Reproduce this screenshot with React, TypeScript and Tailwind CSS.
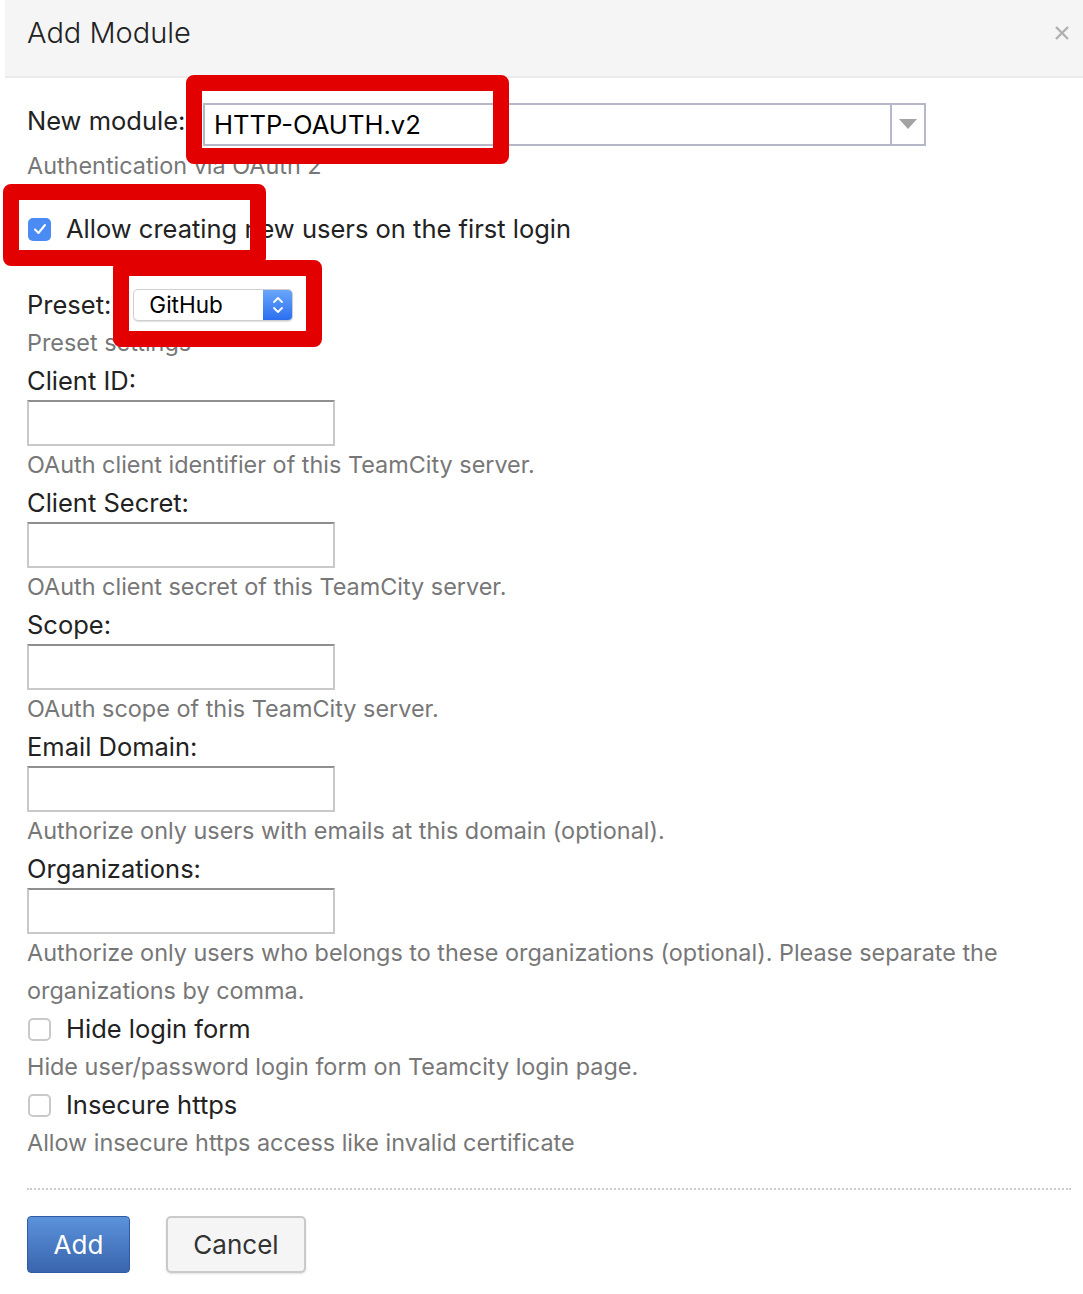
import React from "react";

const font = { fontFamily: "Inter, 'Liberation Sans', sans-serif" };

function Field({ label, help }: { label: string; help: React.ReactNode }) {
  return (
    <div>
      <div className="h-[38px] text-[25.5px] leading-[38px] text-[#222]">{label}</div>
      <div className="h-[46px] w-[308px] border-2 border-[#c9c9c9] border-t-[#8f8f8f] bg-white" />
      <div className="text-[23.4px] leading-[38px] text-[#777]">{help}</div>
    </div>
  );
}

function Checkbox({ checked }: { checked?: boolean }) {
  if (checked) {
    return (
      <div className="flex h-[23px] w-[23px] shrink-0 items-center justify-center rounded-[5px] bg-[#4a8cf3]">
        <svg width="14" height="12" viewBox="0 0 14 12" fill="none">
          <path d="M2 6.5 L5.5 10 L12 2" stroke="white" strokeWidth="2" strokeLinecap="round" strokeLinejoin="round" />
        </svg>
      </div>
    );
  }
  return <div className="h-[23px] w-[23px] shrink-0 rounded-[5px] border-2 border-[#c9c9c9] bg-white" />;
}

export default function App() {
  return (
    <div className="relative min-h-[1294px] w-[1083px] bg-white text-[25.5px]" style={font}>
      {/* Header */}
      <div className="ml-[5px] flex h-[78px] items-center justify-between border-b-2 border-[#ebebeb] bg-[#f5f5f5] pb-[10px] pl-[22px] pr-[14px]">
        <h1 className="text-[29px] font-light text-[#222]">Add Module</h1>
        <svg width="14" height="14" viewBox="0 0 14 14">
          <path d="M1 1 L13 13 M13 1 L1 13" stroke="#b0b0b0" strokeWidth="2.4" />
        </svg>
      </div>

      <div className="pl-[27px] pr-[12px]">
        {/* New module */}
        <div className="mt-[24px] flex items-center">
          <div className="w-[176px] pb-[6px] text-[#222]">New module:</div>
          <div className="flex h-[43px] w-[723px] border-2 border-[#b6b7c9] bg-white">
            <div className="flex-1 pl-[9px] text-[25.6px] leading-[39px] text-black">HTTP-OAUTH.v2</div>
            <div className="flex w-[34px] items-center justify-center border-l-2 border-[#b6b7c9]">
              <svg width="18" height="10" viewBox="0 0 18 10">
                <path d="M0 0 L18 0 L9 10 Z" fill="#a3a3a3" />
              </svg>
            </div>
          </div>
        </div>
        <div className="mt-[1px] text-[23.4px] leading-[38px] text-[#777]">Authentication via OAuth 2</div>

        {/* Allow creating */}
        <div className="mt-[25px] flex h-[38px] items-center gap-[15px] pl-[1px]">
          <Checkbox checked />
          <span className="text-[#222]">Allow creating new users on the first login</span>
        </div>

        {/* Preset */}
        <div className="mt-[38px] flex h-[38px] items-center gap-[22px]">
          <span className="text-[#222]">Preset:</span>
          <div className="flex h-[32px] w-[160px] overflow-hidden rounded-[5px] border border-[#cfcfcf] bg-white shadow-[0_1px_1px_rgba(0,0,0,0.12)]">
            <div className="flex-1 pl-[15px] text-[22.5px] leading-[30px] text-black">GitHub</div>
            <div className="flex w-[29px] items-center justify-center bg-gradient-to-b from-[#6aa6fa] to-[#2a6ef0]">
              <svg width="12" height="20" viewBox="0 0 12 20" fill="none">
                <path d="M2 7 L6 3 L10 7 M2 13 L6 17 L10 13" stroke="white" strokeWidth="1.8" strokeLinecap="round" strokeLinejoin="round" />
              </svg>
            </div>
          </div>
        </div>
        <div className="text-[23.4px] leading-[38px] text-[#777]">Preset settings</div>

        <Field label="Client ID:" help="OAuth client identifier of this TeamCity server." />
        <Field label="Client Secret:" help="OAuth client secret of this TeamCity server." />
        <Field label="Scope:" help="OAuth scope of this TeamCity server." />
        <Field label="Email Domain:" help="Authorize only users with emails at this domain (optional)." />
        <Field
          label="Organizations:"
          help={
            <>
              Authorize only users who belongs to these organizations (optional). Please separate the
              <br />
              organizations by comma.
            </>
          }
        />

        <div className="flex h-[38px] items-center gap-[15px] pl-[1px]">
          <Checkbox />
          <span className="text-[#222]">Hide login form</span>
        </div>
        <div className="text-[23.4px] leading-[38px] text-[#777]">Hide user/password login form on Teamcity login page.</div>
        <div className="flex h-[38px] items-center gap-[15px] pl-[1px]">
          <Checkbox />
          <span className="text-[#222]">Insecure https</span>
        </div>
        <div className="text-[23.4px] leading-[38px] text-[#777]">Allow insecure https access like invalid certificate</div>

        <div className="mt-[26px] border-t-2 border-dotted border-[#cccccc]" />

        <div className="mt-[26px] flex gap-[36px]">
          <button className="h-[57px] w-[103px] rounded-[4px] border border-[#2f5ba3] bg-gradient-to-b from-[#5b93da] to-[#3a64ae] text-[26px] text-white">
            Add
          </button>
          <button className="h-[57px] w-[140px] rounded-[5px] border-2 border-[#cacaca] bg-[#f5f5f5] text-[26px] text-[#333] shadow-[0_1px_2px_rgba(0,0,0,0.12)]">
            Cancel
          </button>
        </div>
      </div>

      {/* Annotation frames */}
      <div className="absolute left-[186px] top-[75px] h-[89px] w-[323px] rounded-[8px] border-[16px] border-[#e30000]" />
      <div className="absolute left-[3px] top-[184px] h-[82px] w-[263px] rounded-[8px] border-[16px] border-[#e30000]" />
      <div className="absolute left-[113px] top-[260px] h-[87px] w-[209px] rounded-[8px] border-[16px] border-[#e30000]" />
    </div>
  );
}
